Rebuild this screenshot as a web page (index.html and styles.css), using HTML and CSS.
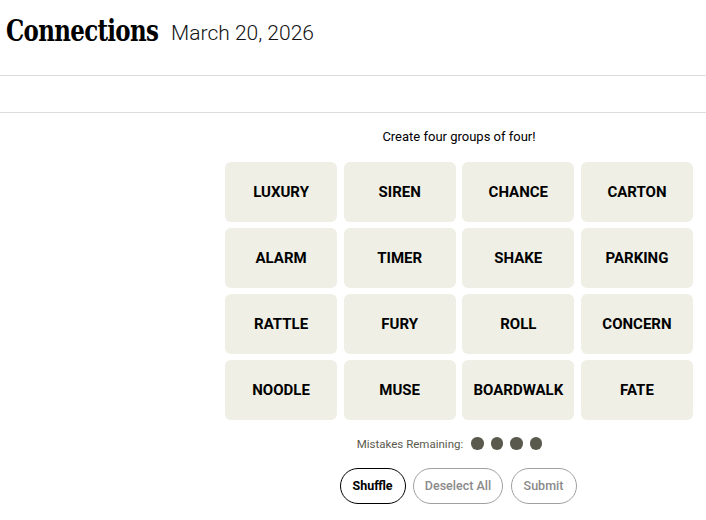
FILE: index.html
```html
<!DOCTYPE html>
<html>
<head>
<meta charset="utf-8">
<link rel="stylesheet" href="styles.css">
</head>
<body>
<header class="top">
  <h1 class="title">Connections</h1>
  <span class="date">March 20, 2026</span>
</header>
<div class="toolbar"></div>
<main class="game">
  <p class="prompt">Create four groups of four!</p>
  <div class="grid">
    <div class="tile">LUXURY</div>
    <div class="tile">SIREN</div>
    <div class="tile">CHANCE</div>
    <div class="tile">CARTON</div>
    <div class="tile">ALARM</div>
    <div class="tile">TIMER</div>
    <div class="tile">SHAKE</div>
    <div class="tile">PARKING</div>
    <div class="tile">RATTLE</div>
    <div class="tile">FURY</div>
    <div class="tile">ROLL</div>
    <div class="tile">CONCERN</div>
    <div class="tile">NOODLE</div>
    <div class="tile">MUSE</div>
    <div class="tile">BOARDWALK</div>
    <div class="tile">FATE</div>
  </div>
  <div class="mistakes">
    <span class="mistakes-label">Mistakes Remaining:</span>
    <span class="dots"><span class="dot"></span><span class="dot"></span><span class="dot"></span><span class="dot"></span></span>
  </div>
  <div class="actions">
    <button class="btn btn-active btn-narrow">Shuffle</button>
    <button class="btn btn-off btn-wide">Deselect All</button>
    <button class="btn btn-off btn-narrow">Submit</button>
  </div>
</main>
</body>
</html>
```
FILE: styles.css
```css
html, body {
  margin: 0;
  padding: 0;
  background: #ffffff;
  color: #000000;
  font-family: Roboto, "Liberation Sans", sans-serif;
}
.top {
  height: 76px;
  box-sizing: border-box;
  border-bottom: 1px solid #dcdcdc;
  display: flex;
  align-items: flex-start;
  padding: 14px 0 0 6px;
  gap: 13px;
}
.title {
  margin: 0 -27px 0 0;
  font-family: "DejaVu Serif Condensed", "DejaVu Serif", serif;
  font-weight: 700;
  font-size: 30px;
  line-height: 34px;
  letter-spacing: -0.8px;
  transform: scaleX(0.85);
  transform-origin: left center;
}
.date {
  font-family: Roboto, "Liberation Sans", sans-serif;
  font-weight: 300;
  font-size: 21px;
  line-height: 34px;
  padding-top: 2px;
  color: #121212;
}
.toolbar {
  height: 37px;
  box-sizing: border-box;
  border-bottom: 1px solid #dcdcdc;
}
.game {
  margin-left: 225px;
  width: 468px;
  display: flex;
  flex-direction: column;
  align-items: center;
}
.prompt {
  margin: 15px 0 0 0;
  font-size: 13px;
  line-height: 18px;
  color: #000;
}
.grid {
  margin-top: 16px;
  width: 468px;
  display: grid;
  grid-template-columns: repeat(4, 1fr);
  column-gap: 6.5px;
  row-gap: 6.5px;
}
.tile {
  height: 59.5px;
  background: #efefe6;
  border-radius: 6px;
  display: flex;
  align-items: center;
  justify-content: center;
  font-weight: 700;
  font-size: 15px;
  color: #000;
}
.mistakes {
  margin-top: 17px;
  display: flex;
  align-items: center;
  padding-right: 19px;
  height: 14px;
}
.mistakes-label {
  font-size: 11.5px;
  color: #5a594e;
  margin-right: 8px;
}
.dots {
  display: flex;
  gap: 7px;
}
.dot {
  width: 12.5px;
  height: 12.5px;
  border-radius: 50%;
  background: #5a594e;
}
.actions {
  margin-top: 17px;
  margin-right: 2px;
  display: flex;
  gap: 7.5px;
}
.btn {
  height: 36px;
  border-radius: 18px;
  background: #fff;
  font-family: Roboto, "Liberation Sans", sans-serif;
  font-weight: 700;
  font-size: 12.5px;
  padding: 0;
  box-sizing: border-box;
  white-space: nowrap;
}
.btn-narrow { width: 66px; }
.btn-wide { width: 90px; }
.btn-active {
  border: 1px solid #000;
  color: #000;
}
.btn-off {
  border: 1px solid #a0a0a0;
  color: #8a8a8a;
  font-weight: 500;
}
```
